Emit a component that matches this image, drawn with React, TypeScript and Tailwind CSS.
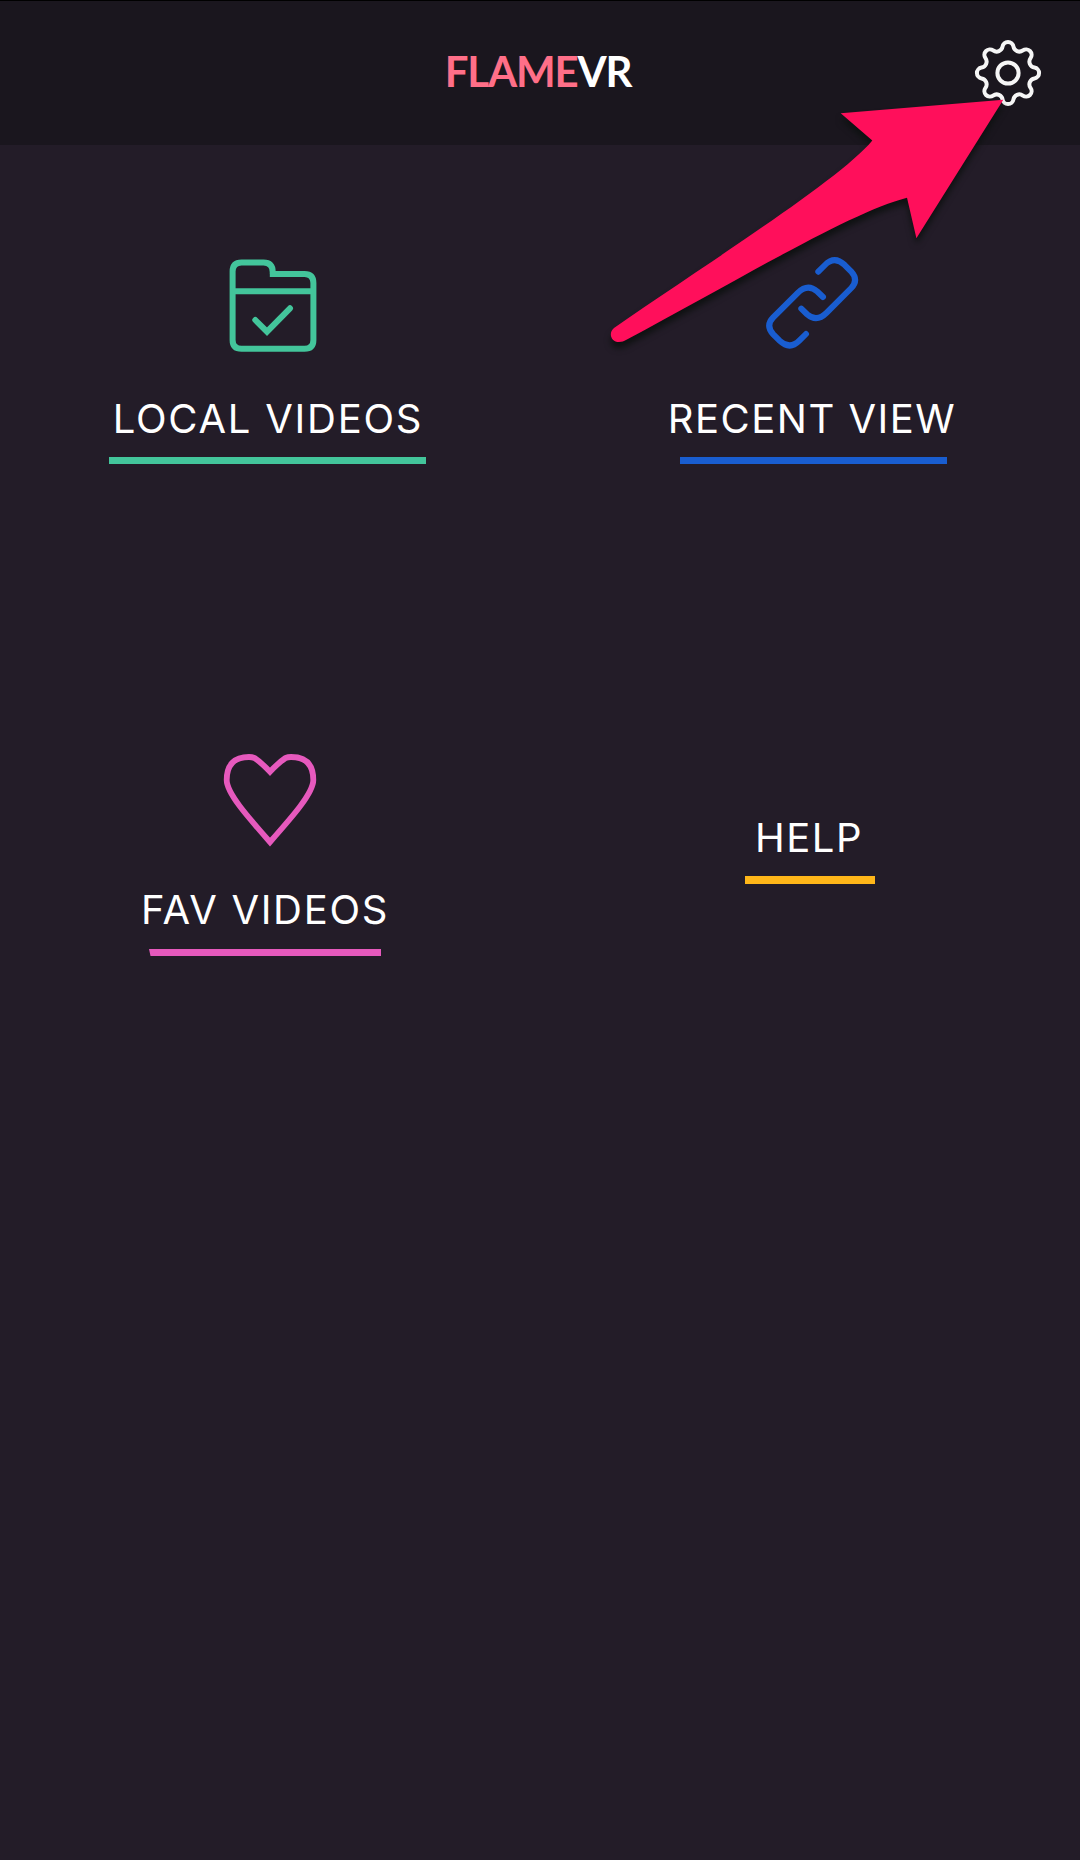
import type { ReactNode } from 'react';

type TileProps = {
  label: string;
  icon?: ReactNode;
  className: string;
  labelClass: string;
  barClass: string;
};

const GEAR_TEETH = 8;

const buildGearPath = (): string => {
  const step = 360 / GEAR_TEETH;
  const half = 11.6;
  const radius = 27;
  const point = (deg: number): string => {
    const rad = (deg * Math.PI) / 180;
    return `${(35 + radius * Math.cos(rad)).toFixed(2)} ${(35 + radius * Math.sin(rad)).toFixed(2)}`;
  };

  let path = `M${point(-half)}`;
  for (let i = 0; i < GEAR_TEETH; i += 1) {
    path += `A5.5 5.5 0 0 1 ${point(i * step + half)}`;
    path += `A6 6 0 0 0 ${point((i + 1) * step - half)}`;
  }
  return `${path}Z`;
};

const GearIcon = () => (
  <svg width="70" height="70" viewBox="0 0 70 70" fill="none" stroke="#f6f6f6" strokeWidth="4">
    <path d={buildGearPath()} strokeLinejoin="round" />
    <circle cx="35" cy="35" r="10.6" />
  </svg>
);

const FolderIcon = () => (
  <svg width="90" height="96" viewBox="0 0 90 96" fill="none" stroke="#43c59b" strokeWidth="6">
    <path d="M44.7 16V14Q44.7 4.5 35.5 4.5H13.5Q4.6 4.5 4.6 13.5V82Q4.6 90.8 13.5 90.8H76.5Q85.4 90.8 85.4 82V25Q85.4 16 76.5 16H41.8" />
    <path d="M4.6 33.3H85.4" />
    <path d="M27.3 62L39 73.7L62 50.3" strokeLinecap="round" />
  </svg>
);

const LinkIcon = () => (
  <svg
    width="96"
    height="96"
    viewBox="0 0 96 96"
    fill="none"
    stroke="#195dd0"
    strokeWidth="6"
    strokeLinecap="round"
  >
    <path d="M54.3 16.7L61 10Q70.5 0.5 80.5 9.8L87 16.3Q95 25 87.3 33L62.5 57.8Q52.7 67.5 43 59.2L37.3 53.7" />
    <path
      d="M54.3 16.7L61 10Q70.5 0.5 80.5 9.8L87 16.3Q95 25 87.3 33L62.5 57.8Q52.7 67.5 43 59.2L37.3 53.7"
      transform="rotate(180 48.15 47.85)"
    />
  </svg>
);

const HeartIcon = () => (
  <svg width="96" height="96" viewBox="0 0 96 96" fill="none" stroke="#e659bd" strokeWidth="5.8">
    <path d="M48 19.7C43 14.5 37 9 32.5 6Q30 5 27 5C12 5 4.7 13 4.7 28C4.7 41 25 64 48 90C71 64 91.3 41 91.3 28C91.3 13 84 5 69 5Q66 5 63.5 6C59 9 53 14.5 48 19.7Z" />
  </svg>
);

const PointerArrow = () => (
  <svg
    className="pointer-events-none absolute top-0 left-0 drop-shadow-[0_6px_3px_rgba(14,17,17,1)]"
    width="1080"
    height="400"
    viewBox="0 0 1080 400"
  >
    <path
      d="M1003.3 99.8L840.7 113.2L872.3 140.5C840 180 700 268 614 328C608 333 611 342 619 342C622 342 624 341 626 340C730 285 850 212 907 197.7L916.4 238.3Z"
      fill="#ff0f5b"
    />
  </svg>
);

const Tile = ({ label, icon, className, labelClass, barClass }: TileProps) => (
  <div className={`flex flex-col items-center ${className}`}>
    {icon}
    <span className={`whitespace-nowrap text-[40px] leading-[48px] text-white ${labelClass}`}>{label}</span>
    <div className={barClass} />
  </div>
);

export default function App() {
  return (
    <div className="relative h-[1860px] w-[1080px] overflow-hidden bg-[#231c28] font-['Inter',sans-serif]">
      <header className="grid h-[145px] grid-cols-[1fr_auto_1fr] items-center border-t border-black bg-[#1a161e]">
        <div />
        <h1 className="-mt-1 mr-1 font-['Lato',sans-serif] text-[42px] leading-none font-bold tracking-[-1.2px] text-[#ff6f88]">
          FLAME<span className="text-white">VR</span>
        </h1>
        <button type="button" aria-label="Settings" className="mr-[37px] justify-self-end">
          <GearIcon />
        </button>
      </header>

      <main className="grid grid-cols-2 grid-rows-[494px_auto] pt-[113px]">
        <Tile
          label="LOCAL VIDEOS"
          icon={<div className="ml-[11px]"><FolderIcon /></div>}
          className="w-[535px]"
          labelClass="mt-[41px] ml-px tracking-[1.75px]"
          barClass="mt-3.5 h-[7px] w-[317px] bg-[#43c59b]"
        />
        <Tile
          label="RECENT VIEW"
          icon={<div className="-mt-[3px] mr-[3px] mb-[3px]"><LinkIcon /></div>}
          className="w-[547px]"
          labelClass="mt-[41px] mr-[3px] tracking-[1.5px]"
          barClass="mt-3.5 h-[7px] w-[267px] bg-[#195dd0]"
        />
        <Tile
          label="FAV VIDEOS"
          icon={<div className="ml-[9px]"><HeartIcon /></div>}
          className="w-[530px]"
          labelClass="mt-[38px] tracking-[1.7px]"
          barClass="mt-[15px] h-[7px] w-[232px] bg-[#e659bd] [clip-path:polygon(0_0,100%_0,100%_100%,1.5px_100%)]"
        />
        <Tile
          label="HELP"
          className="w-[540px] pt-[62px]"
          labelClass="mr-0.5 tracking-[1.5px]"
          barClass="mt-3.5 h-[7.5px] w-[130px] bg-[#ffb619]"
        />
      </main>

      <PointerArrow />
    </div>
  );
}
